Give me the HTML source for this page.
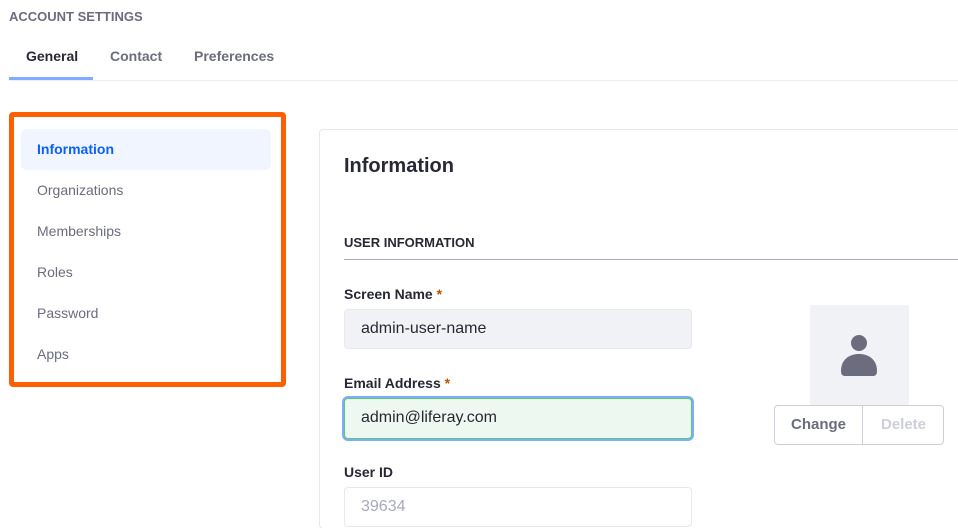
<!DOCTYPE html>
<html><head><meta charset="utf-8"><style>
*{box-sizing:border-box;margin:0;padding:0}
html,body{width:958px;height:528px;overflow:hidden}
body{background:#fff;font-family:"Liberation Sans","DejaVu Sans",sans-serif;position:relative;color:#272833}
.a{position:absolute}
.t{font-size:14px;font-weight:bold}
.nav{font-size:14px;color:#6b6c7e}
.lbl{font-size:14px;font-weight:bold;color:#272833}
.lbl span{color:#b95000}
.in{position:absolute;left:344px;width:348px;height:40px;border-radius:4px;font-size:16px;padding:0 16px;line-height:38px}
</style></head><body>
<div class="a" style="left:9px;top:9px;font-size:13px;font-weight:bold;color:#6b6c7e">ACCOUNT SETTINGS</div>
<div class="a t" style="left:26px;top:48px;color:#272833">General</div>
<div class="a t" style="left:110px;top:48px;color:#6b6c7e">Contact</div>
<div class="a t" style="left:194px;top:48px;color:#6b6c7e">Preferences</div>
<div class="a" style="left:9px;top:80px;width:949px;height:1px;background:#eeeef2"></div>
<div class="a" style="left:9px;top:77px;width:84px;height:3px;background:#80acff"></div>

<div class="a" style="left:9px;top:112px;width:277px;height:275px;border:5px solid #ff5f00;border-radius:4px"></div>
<div class="a" style="left:21px;top:129px;width:250px;height:41px;background:#f0f5ff;border-radius:6px"></div>
<div class="a t" style="left:37px;top:141px;color:#0b5fff">Information</div>
<div class="a nav" style="left:37px;top:182px">Organizations</div>
<div class="a nav" style="left:37px;top:223px">Memberships</div>
<div class="a nav" style="left:37px;top:264px">Roles</div>
<div class="a nav" style="left:37px;top:305px">Password</div>
<div class="a nav" style="left:37px;top:346px">Apps</div>

<div class="a" style="left:319px;top:129px;width:660px;height:400px;border:1px solid #e7e7ed;border-radius:4px"></div>
<div class="a" style="left:344px;top:155px;font-size:20px;font-weight:bold">Information</div>
<div class="a" style="left:344px;top:235px;font-size:13px;font-weight:bold">USER INFORMATION</div>
<div class="a" style="left:344px;top:259px;width:614px;height:1px;background:#a7a9bc"></div>

<div class="a lbl" style="left:344px;top:286px">Screen Name <span>*</span></div>
<div class="in" style="top:309px;background:#f1f2f5;border:1px solid #e7e7ed;color:#272833">admin-user-name</div>
<div class="a lbl" style="left:344px;top:375px">Email Address <span>*</span></div>
<div class="in" style="top:398px;height:41px;background:#edf9f0;border:1px solid #5aca75;box-shadow:0 0 0 2px #80acff;color:#272833">admin@liferay.com</div>
<div class="a lbl" style="left:344px;top:464px">User ID</div>
<div class="in" style="top:487px;background:#fff;border:1px solid #e7e7ed;color:#a7a9bc">39634</div>

<div class="a" style="left:810px;top:305px;width:99px;height:100px;background:#f1f2f5;border-radius:2px"></div>
<svg class="a" style="left:840px;top:333px" width="38" height="44" viewBox="0 0 38 44"><circle cx="19" cy="10" r="8" fill="#6b6c7e"/><path d="M1 38 C1 26 10 21 19 21 C28 21 37 26 37 38 C37 42 35 43 33 43 L5 43 C3 43 1 42 1 38Z" fill="#6b6c7e"/></svg>
<div class="a" style="left:774px;top:405px;width:170px;height:40px;border:1px solid #cdced9;border-radius:4px"></div>
<div class="a" style="left:862px;top:405px;width:1px;height:40px;background:#cdced9"></div>
<div class="a" style="left:774px;top:416px;width:89px;text-align:center;font-size:15px;font-weight:bold;color:#6b6c7e">Change</div>
<div class="a" style="left:863px;top:416px;width:81px;text-align:center;font-size:15px;font-weight:bold;color:#cdced9">Delete</div>
</body></html>
